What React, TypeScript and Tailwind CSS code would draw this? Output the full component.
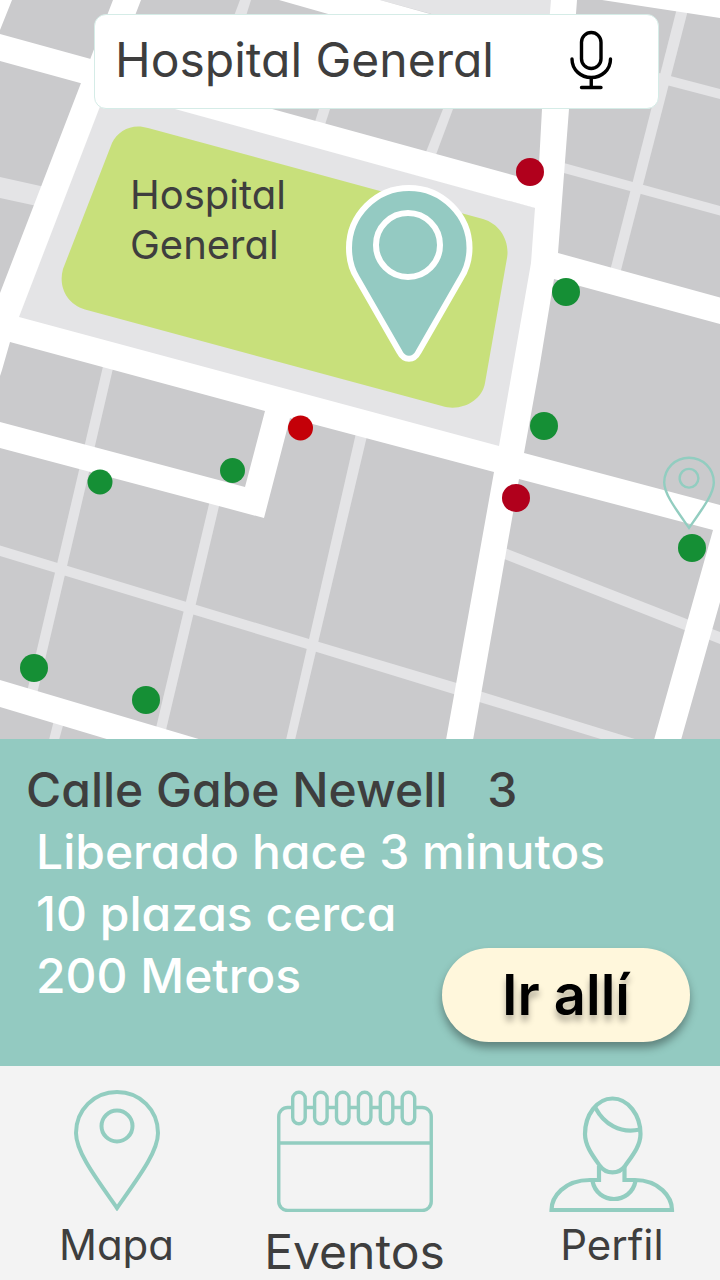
import type { ReactNode } from "react";

const GREEN = "#158f35";
const CRIMSON = "#b1001c";

const spots = [
  { x: 530, y: 172, r: 14, color: CRIMSON },
  { x: 516, y: 498, r: 14, color: CRIMSON },
  { x: 300.5, y: 428, r: 12.5, color: "#c40008" },
  { x: 566, y: 292, r: 14, color: GREEN },
  { x: 544, y: 426, r: 14, color: GREEN },
  { x: 692, y: 548, r: 14, color: GREEN },
  { x: 34, y: 668, r: 14, color: GREEN },
  { x: 146, y: 700, r: 14, color: GREEN },
  { x: 100, y: 482, r: 12.5, color: GREEN },
  { x: 232.5, y: 470.5, r: 12.5, color: GREEN },
];

function PinShape({ strokeWidth }: { strokeWidth: number }) {
  return (
    <g fill="none" stroke="#92cdc0" strokeWidth={strokeWidth}>
      <path d="M43 118C22 88 2 62 2 43C2 20 20 2 43 2C66 2 84 20 84 43C84 62 64 88 43 118Z" />
      <circle cx="43" cy="36" r="15.5" />
    </g>
  );
}

function CityMap() {
  return (
    <svg viewBox="0 0 720 739" className="block h-auto w-full" role="img" aria-label="Mapa">
      <rect width="720" height="739" fill="#cacacc" />
      {/* minor streets */}
      <g fill="#e4e4e6">
        <path d="M0 177L45 187L37 206L0 198Z" />
        <path d="M240 0H251L246 16H234Z" />
        <path d="M319 109H330L324 128L314 125Z" />
        <path d="M443 109H453L434 160L424 157Z" />
        <path d="M677 8L688 10L620 274L610 271Z" />
        <path d="M655 72L720 89V99L655 82Z" />
        <path d="M562 162.500L720 206V215.500L562 172.500Z" />
        <path d="M104 362L114 364L94 450L84 448Z" />
        <path d="M80 466L90 468L37 694L27 692Z" />
        <path d="M54 720L64 722L59 740H49Z" />
        <path d="M210 500L220 502L166 730L156 728Z" />
        <path d="M356 433L367 436L295 740H286Z" />
        <path d="M0 545.500L309 639L460 684V696L307 649L0 556Z" />
        <path d="M476 690L638 740H604L476 701Z" />
        <path d="M505 548L720 632V644L503 558.500Z" />
        <path d="M380 0H555V40H528Z" />
        <path d="M102 100L145 100L536 208L532 263L500 447L18 318Z" />
      </g>
      {/* main roads */}
      <g fill="#fff">
        <path d="M0 0H12L0 30Z" />
        <path d="M0 34L545 184L540 209.500L535 208L0 61Z" />
        <path d="M113 0H141L19 317L0 347V293L81 83Z" />
        <path d="M0 300L19 317L499 446L510 449L505 475L494 472L290 418L264 518L0 448V422L245 487L265 411L10 342L2 370L0 376Z" />
        <path d="M551 0H577L569 109L558 253L720 297.500V324L554 279L539 370L524 453L720 505V602L681 740H654L713 530L519 479L473 740H446L494 472L499 446L531 263L535 208L538 183L542 109Z" />
        <path d="M0 680L202 740H110L0 707Z" />
        <path d="M279 0H380L432 14.500V42L330 14.500Z" />
        <path d="M602 0H720V18Z" />
      </g>
      <path
        fill="#c8e07b"
        d="M148 128L483 219C500 224 510 241 507 258L485 383C482 401 461 412 442 406L85 309.500C67 304 58 287 63 269L112 143C118 130 133 123 148 128Z"
      />
      <g fill="#94cac2" stroke="#fff" strokeWidth="6" strokeLinejoin="round">
        <path d="M409 188C442 188 469.500 215 469.500 248C469.500 259 466 270 461 278L418.500 352C414 361 404 361 399.500 352L357 278C352 270 349 259 349 248C349 215 376 188 409 188Z" />
        <circle cx="408" cy="245" r="32" />
      </g>
      {spots.map((s) => (
        <circle key={`${s.x}-${s.y}`} cx={s.x} cy={s.y} r={s.r} fill={s.color} />
      ))}
      <g transform="translate(663 456.500) scale(0.605)">
        <PinShape strokeWidth={4} />
      </g>
    </svg>
  );
}

function MicIcon() {
  return (
    <svg viewBox="0 0 44 60" className="h-[60px] w-11" fill="none" stroke="#000" strokeWidth="3.4" strokeLinecap="round" aria-hidden="true">
      <rect x="12.500" y="2.500" width="19.500" height="36" rx="9.750" />
      <path d="M3 29C3 40 12 47.500 22.250 47.500C32.500 47.500 41.500 40 41.500 29" />
      <path d="M22.250 48V57.500M12.500 57.500H32" />
    </svg>
  );
}

function PinIcon() {
  return (
    <svg viewBox="0 0 86 121" className="h-[121px] w-[86px]" aria-hidden="true">
      <PinShape strokeWidth={4} />
    </svg>
  );
}

function CalendarIcon() {
  return (
    <svg viewBox="0 0 156 122" className="h-[122px] w-[156px]" fill="#f3f3f3" stroke="#92cdc0" strokeWidth="3.4" aria-hidden="true">
      <rect x="1.750" y="17.500" width="152.500" height="103" rx="9" />
      <path d="M2 53H154" />
      {[0, 1, 2, 3, 4, 5].map((i) => (
        <rect key={i} x={15.7 + i * 21.9} y="2.300" width="12.500" height="31.500" rx="6.250" />
      ))}
    </svg>
  );
}

function PersonIcon() {
  return (
    <svg viewBox="0 0 126 117" className="h-[117px] w-[126px]" fill="none" stroke="#92cdc0" strokeWidth="4.2" aria-hidden="true">
      <path d="M63.500 2.500C79 2.500 91.500 19 91.500 38C91.500 50 83 60 76 70C70 78.500 57 78.500 51 70C44 60 36 50 36 38C36 19 48 2.500 63.500 2.500Z" />
      <path d="M46.500 12C55 28 71 38 91 33.500" />
      <path d="M50 70V84H41C15 84 2.500 101 2.500 114H123C123 101 110 84 86 84H75.500V70" />
      <path d="M43.500 85C48 109 82 109 86.500 85" />
    </svg>
  );
}

function NavLink({ href, className, children }: { href: string; className: string; children: ReactNode }) {
  return (
    <a href={href} className={`flex flex-col items-center ${className}`}>
      {children}
    </a>
  );
}

export default function App() {
  return (
    <div className="flex flex-col bg-[#f3f3f3] font-['Inter',sans-serif] text-[#3e3e3e] [font-feature-settings:'cv11']">
      <main>
        <section className="relative">
          <CityMap />
          <form
            className="absolute top-3.5 right-[61px] left-[94px] flex h-[95px] items-center rounded-xl border border-[#d5ece7] bg-white pr-[45px] pb-1 pl-5"
            onSubmit={(e) => e.preventDefault()}
          >
            <input
              type="text"
              aria-label="Buscar"
              defaultValue="Hospital General"
              className="min-w-0 flex-1 bg-transparent text-[48px] outline-none"
            />
            <button type="button" aria-label="Buscar por voz">
              <MicIcon />
            </button>
          </form>
          <p className="absolute top-[170px] left-[130px] w-44 text-[40px] leading-[50px]">Hospital General</p>
        </section>

        <section className="flex flex-col bg-[#93cac1] pt-5 pr-[30px] pb-6 pl-[26px] text-[48px] leading-[62px] font-medium">
          <h1 className="flex gap-10">
            <span>Calle Gabe Newell</span>
            <span>3</span>
          </h1>
          <div className="flex flex-col pl-2.5 text-white">
            <p>Liberado hace 3 minutos</p>
            <p>10 plazas cerca</p>
          </div>
          <div className="flex items-start justify-between pl-2.5">
            <p className="text-white">200 Metros</p>
            <button
              type="button"
              className="mt-[3px] h-[94px] w-[248px] rounded-full bg-[#fff7dc] text-[56px] font-semibold text-black shadow-[0_6px_8px_rgba(0,0,0,0.35)] [font-feature-settings:normal] [text-shadow:0_6px_6px_rgba(0,0,0,0.3)]"
            >
              Ir allí
            </button>
          </div>
        </section>
      </main>

      <nav className="grid grid-cols-[233fr_243fr_244fr] items-start pt-6">
        <NavLink href="#mapa" className="gap-1 text-[42px] leading-[60px]">
          <PinIcon />
          <span>Mapa</span>
        </NavLink>
        <NavLink href="#eventos" className="gap-2.5 text-[48px] leading-[60px]">
          <CalendarIcon />
          <span>Eventos</span>
        </NavLink>
        <NavLink href="#perfil" className="gap-0.5 pt-1.5 pl-7 text-[42px] leading-[60px]">
          <PersonIcon />
          <span>Perfil</span>
        </NavLink>
      </nav>
    </div>
  );
}
